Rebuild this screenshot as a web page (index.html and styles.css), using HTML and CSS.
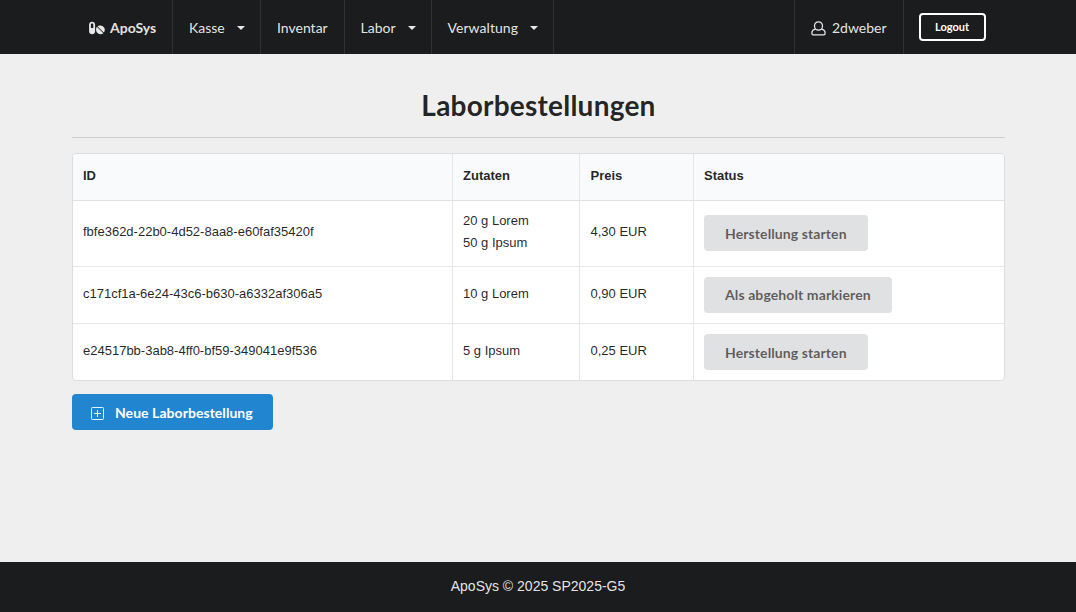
FILE: index.html
```html
<!DOCTYPE html>
<html lang="de">
<head>
<meta charset="utf-8">
<title>Laborbestellungen</title>
<link rel="stylesheet" href="styles.css">
</head>
<body>
<nav class="menu">
  <div class="menu-inner">
    <a class="item brand">
      <svg class="pills" viewBox="0 0 16 14" width="16" height="14"><path fill="currentColor" fill-rule="evenodd" d="M3.100 .7C4.800.7 6.100 2 6.100 3.700v6.600c0 1.700-1.300 3-3 3s-3-1.300-3-3V3.700C.1 2 1.400.7 3.100.7zM1.900 3.800V7h2.400V3.800c0-.8-.4-1.300-1.200-1.300s-1.200.5-1.200 1.300z"/><path fill="currentColor" d="M8.100 6l6 6a.35.35 0 0 1-.1.500c-1.600 1.200-3.900 1.100-5.400-.4S6.500 8.100 7.700 6a.3.3 0 0 1 .4 0zM14.600 5.900c1.500 1.500 1.600 3.700.4 5.300a.35.35 0 0 1-.5 0L8.700 5.500a.35.35 0 0 1 .1-.5c1.700-1.100 4.300-.6 5.800.9z"/></svg>
      <b>ApoSys</b></a>
    <a class="item kasse">Kasse<i class="caret"></i></a>
    <a class="item inventar">Inventar</a>
    <a class="item labor">Labor<i class="caret"></i></a>
    <a class="item verwaltung">Verwaltung<i class="caret"></i></a>
    <a class="item user">
      <svg class="person" viewBox="0 0 15 15" width="15" height="15" fill="none" stroke="currentColor" stroke-width="1.250"><ellipse cx="7.500" cy="5" rx="4" ry="4.200"/><path d="M4.500 8.200C2 8.700.9 10.300.9 12v.6c0 .8.6 1.300 1.300 1.300h10.600c.7 0 1.300-.5 1.300-1.300V12c0-1.700-1.100-3.300-3.600-3.800"/></svg>
      2dweber</a>
    <div class="item last"><button class="logout">Logout</button></div>
  </div>
</nav>
<main>
  <h1>Laborbestellungen</h1>
  <table>
    <colgroup><col class="c-id"><col class="c-zutaten"><col class="c-preis"><col></colgroup>
    <thead><tr><th>ID</th><th>Zutaten</th><th class="preis">Preis</th><th>Status</th></tr></thead>
    <tbody>
      <tr class="tall"><td>fbfe362d-22b0-4d52-8aa8-e60faf35420f</td><td>20 g Lorem<br>50 g Ipsum</td><td class="preis">4,30 EUR</td><td><button class="btn low">Herstellung starten</button></td></tr>
      <tr><td>c171cf1a-6e24-43c6-b630-a6332af306a5</td><td>10 g Lorem</td><td class="preis">0,90 EUR</td><td><button class="btn">Als abgeholt markieren</button></td></tr>
      <tr><td>e24517bb-3ab8-4ff0-bf59-349041e9f536</td><td>5 g Ipsum</td><td class="preis">0,25 EUR</td><td><button class="btn low">Herstellung starten</button></td></tr>
    </tbody>
  </table>
  <button class="btn primary"><svg viewBox="0 0 13 13" width="13" height="13" fill="none" stroke="currentColor"><rect x=".5" y=".5" width="12" height="12" rx=".8"/><path d="M6.500 3v7M3 6.500h7"/></svg>Neue Laborbestellung</button>
</main>
<footer>ApoSys © 2025 SP2025-G5</footer>
</body>
</html>
```
FILE: styles.css
```css
* { box-sizing: border-box; }
body {
  margin: 0;
  height: 612px;
  display: flex;
  flex-direction: column;
  background: #efefef;
  color: rgba(0, 0, 0, .87);
  font: 13px/22px "Helvetica Neue", "Liberation Sans", sans-serif;
}
.menu {
  height: 54px;
  background: #1b1c1d;
  color: rgba(255, 255, 255, .9);
  font: 14px/14px Lato, sans-serif;
}
.menu-inner {
  width: 933px;
  height: 100%;
  margin-left: 72px;
  display: flex;
}
.item {
  display: flex;
  align-items: center;
  padding: 2px 15px 0 16px;
  border-right: 1px solid #303132;
  white-space: nowrap;
}
svg { flex-shrink: 0; }
.brand { width: 101px; padding: 2px 0 0 17px; }
.kasse { width: 88px; }
.inventar { width: 84px; }
.labor { width: 87px; padding-left: 15.5px; }
.verwaltung { width: 122px; padding-left: 15.5px; letter-spacing: .05px; }
.user { width: 110px; margin-left: auto; border-left: 1px solid #303132; }
.last { width: 101px; padding: 0 15px; border: 0; }
.pills { margin-right: 5px; }
.person { margin-right: 6px; }
.caret {
  margin-left: auto;
  border: 4px solid transparent;
  border-top-color: currentColor;
  border-bottom: 0;
}
button { border: 0; font-family: Lato, sans-serif; font-weight: 700; white-space: nowrap; }
.logout {
  width: 67px;
  height: 28px;
  padding: 0 1px 1px 0;
  border: 2px solid #fff;
  border-radius: 4px;
  background: transparent;
  color: #fff;
  font-size: 11px;
  line-height: 11px;
}
main { width: 933px; margin-left: 72px; flex: 1; }
h1 {
  height: 84px;
  margin: 0 0 15px;
  padding-top: 33px;
  border-bottom: 1px solid #cecece;
  text-align: center;
  font: 700 28px/36px Lato, sans-serif;
  letter-spacing: .23px;
}
table {
  width: 100%;
  table-layout: fixed;
  border: 1px solid #dcddde;
  border-radius: 4px;
  border-spacing: 0;
  background: #fff;
  overflow: hidden;
}
.c-id { width: 380px; }
.c-zutaten { width: 127px; }
.c-preis { width: 114px; }
th, td { padding: 0 10px; text-align: left; border-right: 1px solid #e5e6e6; }
th:last-child, td:last-child { border-right: 0; }
th { height: 47px; padding-bottom: 2px; background: #f9fafb; border-bottom: 1px solid #e1e2e3; }
td { height: 57px; border-bottom: 1px solid #e7e7e7; }
.tall td { height: 66px; }
td { padding-bottom: 3px; }
.preis { padding-left: 10.5px; }
td:last-child { padding-bottom: 0; }
.tall td:last-child { padding-bottom: 2px; }
tr:last-child td { height: 56px; border-bottom: 0; }
.btn {
  display: block;
  height: 36px;
  padding: 0 21px;
  border-radius: 4px;
  background: #e0e1e2;
  color: rgba(0, 0, 0, .6);
  font-size: 14px;
  line-height: 36px;
  letter-spacing: .1px;
}
.low { padding-top: 2px; line-height: 34px; }
.primary {
  display: flex;
  align-items: center;
  width: 201px;
  margin-top: 13px;
  padding: 2px 0 0 19px;
  background: #2185d0;
  color: #fff;
  line-height: 34px;
  letter-spacing: .05px;
}
.primary svg { margin-right: 11px; opacity: .9; }
footer {
  height: 50px;
  background: #1b1c1d;
  color: rgba(255, 255, 255, .9);
  font-size: 14px;
  line-height: 48px;
  text-align: center;
}
```
